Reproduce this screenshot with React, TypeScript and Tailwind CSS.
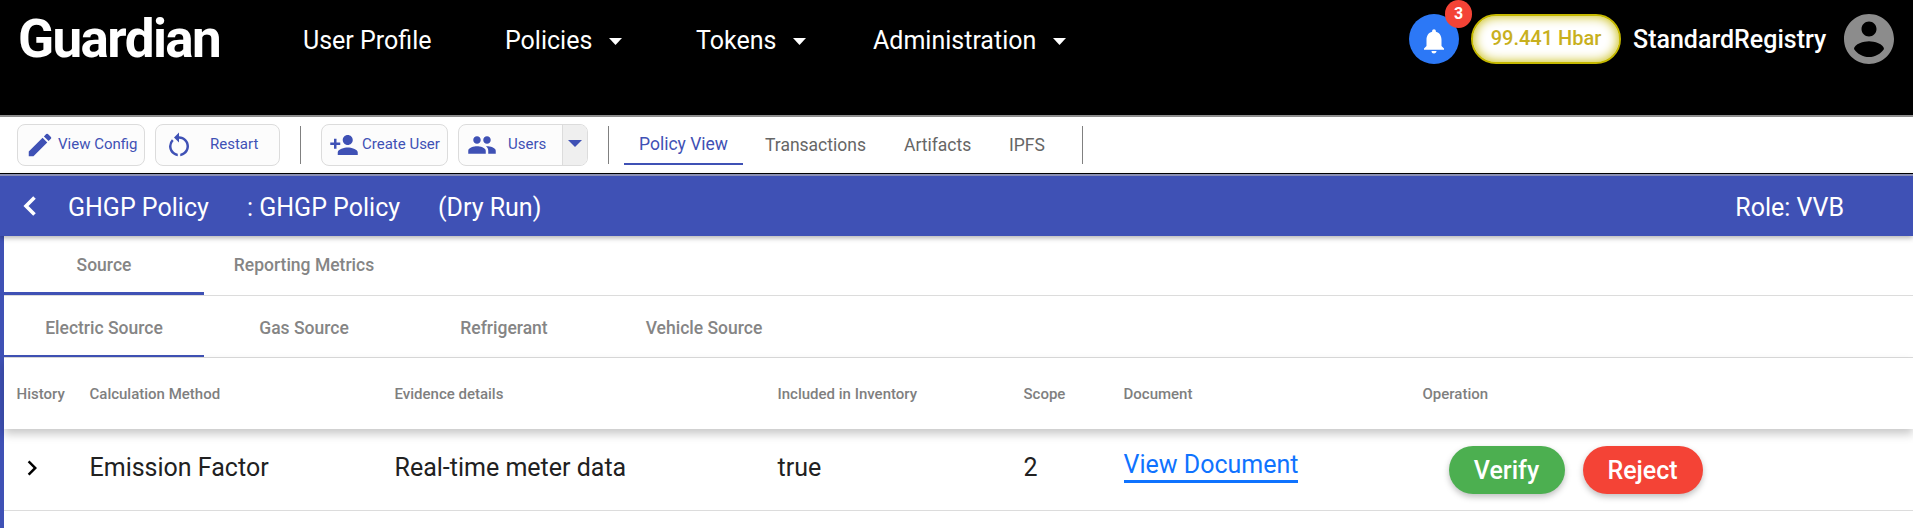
import React from "react";
import {
  MdEdit,
  MdPersonAdd,
  MdGroup,
  MdNotifications,
  MdChevronRight,
  MdRestartAlt,
} from "react-icons/md";

function NavItem({ label, className, menu = true }: { label: string; className: string; menu?: boolean }) {
  return (
    <a className={`flex shrink-0 items-center text-[25px] leading-none text-white ${className}`}>
      {label}
      {menu && (
        <svg className="ml-[17px] mt-0.5 h-[7px] w-[13px]" viewBox="0 0 13 7" fill="currentColor">
          <path d="M0 0h13L6.500 7z" />
        </svg>
      )}
    </a>
  );
}

function Avatar() {
  return (
    <svg className="-m-[5px] size-[60px] text-[#8c8c8c]" viewBox="0 0 24 24" fill="currentColor">
      <path d="M12 2C6.480 2 2 6.480 2 12s4.480 10 10 10 10-4.480 10-10S17.520 2 12 2zm0 3c1.660 0 3 1.340 3 3s-1.340 3-3 3-3-1.340-3-3 1.340-3 3-3zm0 14.200c-2.500 0-4.710-1.280-6-3.220.030-1.990 4-3.080 6-3.080 1.990 0 5.970 1.090 6 3.080-1.290 1.940-3.500 3.220-6 3.220z" />
    </svg>
  );
}

function Header() {
  return (
    <header className="flex h-[115px] items-start bg-black">
      <div className="flex h-[79px] w-[303px] shrink-0 items-center pl-[18px] text-[53px] font-bold leading-none tracking-[-1.600px] text-white">
        Guardian
      </div>
      <nav className="flex h-20 flex-1 items-center">
        <NavItem label="User Profile" className="w-[202px]" menu={false} />
        <NavItem label="Policies" className="w-[191px]" />
        <NavItem label="Tokens" className="w-[177px]" />
        <NavItem label="Administration" className="" />
      </nav>
      <div className="flex h-[78px] shrink-0 items-center pr-[19px]">
        <div className="relative mr-3 flex size-[50px] items-center justify-center rounded-full bg-[#2c78f6]">
          <MdNotifications className="mt-1 size-[30px] text-white" />
          <span className="absolute -top-[14px] left-9 flex h-7 w-[27px] items-center justify-center rounded-full bg-[#f44336] pb-px text-base font-bold text-white">
            3
          </span>
        </div>
        <div className="mr-3 flex h-[50px] w-[150px] items-center justify-center rounded-[25px] border-2 border-[#c5b800] bg-white pb-0.5 text-[20px] font-medium leading-none text-[#c8b01d] shadow-[inset_0_0_12px_#c5b800]">
          99.441 Hbar
        </div>
        <span className="mr-[18px] w-[193px] text-[25px] font-medium leading-none text-white">StandardRegistry</span>
        <Avatar />
      </div>
    </header>
  );
}

const toolButton =
  "flex h-[42px] shrink-0 items-center rounded-lg border border-[#dcdcdc] bg-[#fcfcfc] text-[15px] text-[#3f51b5]";

function Divider({ className }: { className: string }) {
  return <div className={`h-[38px] w-px shrink-0 bg-[#808080] ${className}`} />;
}

function Toolbar() {
  return (
    <div className="flex h-[59px] items-center border-b border-t-2 border-b-black border-t-[#8c8c8c] bg-white pl-[17px]">
      <div className={`${toolButton} w-[128px] pl-[7px]`}>
        <MdEdit className="size-[30px]" />
        <span className="mb-0.5 ml-[3px]">View Config</span>
      </div>
      <div className={`${toolButton} ml-[10px] w-[125px] pl-[8px]`}>
        <MdRestartAlt className="size-[30px]" />
        <span className="mb-0.5 ml-4">Restart</span>
      </div>
      <Divider className="ml-5" />
      <div className={`${toolButton} ml-5 w-[127px] pl-[7px]`}>
        <MdPersonAdd className="size-[30px]" />
        <span className="mb-0.5 ml-[3px]">Create User</span>
      </div>
      <div className={`${toolButton} ml-[10px] w-[130px] overflow-hidden pl-[8px]`}>
        <MdGroup className="size-[30px]" />
        <span className="mb-0.5 ml-[11px] flex-1">Users</span>
        <div className="flex h-full w-[25px] items-center justify-center border-l border-[#dcdcdc] bg-[#efefef]">
          <svg className="mb-1 h-[7px] w-[14px]" viewBox="0 0 14 7" fill="currentColor">
            <path d="M0 0h14L7 7z" />
          </svg>
        </div>
      </div>
      <Divider className="ml-5" />
      <div className="ml-[15px] flex h-[42px] items-center text-[17.500px] text-[#666]">
        <span className="flex h-[41px] w-[119px] items-center justify-center self-start border-b-2 border-[#3f51b5] text-[#3f51b5]">
          <span className="mt-0.5">Policy View</span>
        </span>
        <span className="ml-[22px] w-[139px]">Transactions</span>
        <span className="w-[105px]">Artifacts</span>
        <span className="w-[73px]">IPFS</span>
      </div>
      <Divider className="" />
    </div>
  );
}

function TitleBar() {
  return (
    <div className="relative z-10 flex h-[62px] items-center border-t-2 border-[#8a8fb5] bg-[#3f51b5] pt-1 text-[25px] text-white shadow-[0_2px_5px_rgba(0,0,0,0.3)]">
      <svg className="mb-1 ml-[23px] h-[20px] w-[13px]" viewBox="0 0 13 20" fill="none" stroke="currentColor" strokeWidth="3.600">
        <path d="M11.500 1.500L3 10l8.500 8.500" />
      </svg>
      <span className="ml-[32px] w-[179px]">GHGP Policy</span>
      <span className="w-[191px]">: GHGP Policy</span>
      <span>(Dry Run)</span>
      <span className="ml-auto mr-[69px]">Role: VVB</span>
    </div>
  );
}

function Tabs({ labels, className, bar }: { labels: string[]; className: string; bar: string }) {
  return (
    <div className={`flex border-b border-[#dcdcdc] text-[17.500px] font-medium text-[#858585] ${className}`}>
      {labels.map((label, i) => (
        <div key={label} className={`flex w-[200px] items-center justify-center ${i === 0 ? bar : "border-b-2 border-transparent"}`}>
          {label}
        </div>
      ))}
    </div>
  );
}

const grid = "grid grid-cols-[73px_305px_383px_246px_100px_299px_1fr] items-center pl-[12.5px]";

function Table() {
  return (
    <div>
      <div className={`${grid} relative h-[71px] bg-white pt-0.5 text-[15px] font-medium text-[#7f7f7f] shadow-[0_5px_9px_rgba(0,0,0,0.22)]`}>
        <span>History</span>
        <span>Calculation Method</span>
        <span>Evidence details</span>
        <span>Included in Inventory</span>
        <span>Scope</span>
        <span>Document</span>
        <span>Operation</span>
      </div>
      <div className={`${grid} h-[82px] border-b border-[#dcdcdc] pb-1 text-[25px] text-[#212121]`}>
        <MdChevronRight className="size-[30px] text-black" />
        <span>Emission Factor</span>
        <span>Real-time meter data</span>
        <span>true</span>
        <span>2</span>
        <span className="flex pb-[3px]">
          <a className="border-b-[3px] border-[#0f73ff] leading-[31px] text-[#0f73ff]">View Document</a>
        </span>
        <div className="flex gap-[18px] pl-[26px] pt-1 font-medium text-white">
          <button className="h-[48px] w-[116px] rounded-[24px] bg-[#4caf50] pt-0.5 shadow-[0_3px_6px_rgba(0,0,0,0.25)]">Verify</button>
          <button className="h-[48px] w-[120px] rounded-[24px] bg-[#f44336] pt-0.5 shadow-[0_3px_6px_rgba(0,0,0,0.25)]">Reject</button>
        </div>
      </div>
    </div>
  );
}

export default function App() {
  return (
    <div className="h-[528px] w-full overflow-hidden bg-white font-[Roboto,sans-serif]">
      <Header />
      <Toolbar />
      <TitleBar />
      <main className="h-[292px] border-l-4 border-[#3f51b5]">
        <Tabs labels={["Source", "Reporting Metrics"]} className="h-[60px] [&>div]:pt-0.5" bar="border-b-[3px] border-[#3f51b5]" />
        <Tabs
          labels={["Electric Source", "Gas Source", "Refrigerant", "Vehicle Source"]}
          className="h-[62px] [&>div]:pt-[5px]"
          bar="border-b-2 border-[#3f51b5]"
        />
        <Table />
      </main>
    </div>
  );
}
